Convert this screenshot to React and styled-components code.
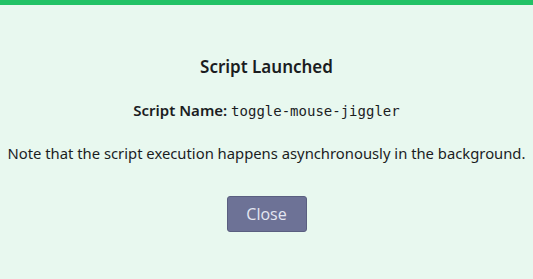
import React from 'react';
import styled, { createGlobalStyle } from 'styled-components';

const GlobalStyle = createGlobalStyle`
  html, body {
    margin: 0;
    padding: 0;
    background: #e8f8ef;
  }
  body {
    font-family: 'Noto Sans', 'Liberation Sans', sans-serif;
    color: #1b1d1f;
  }
`;

const Page = styled.div`
  min-height: 279px;
  border-top: 5px solid #22c266;
  box-sizing: border-box;
  display: flex;
  flex-direction: column;
  align-items: center;
  padding-top: 50px;
`;

const Title = styled.h2`
  margin: 0;
  font-size: 17px;
  font-weight: 600;
  line-height: 24px;
`;

const NameRow = styled.p`
  margin: 20px 0 0;
  font-size: 15px;
  line-height: 22px;
`;

const Label = styled.span`
  font-weight: 600;
`;

const Mono = styled.code`
  font-family: 'DejaVu Sans Mono', 'Liberation Mono', monospace;
  font-size: 14px;
`;

const Note = styled.p`
  margin: 20px 0 0;
  font-size: 14.8px;
  line-height: 22px;
`;

const CloseButton = styled.button`
  margin-top: 32px;
  width: 80px;
  height: 36px;
  background: #6d7296;
  border: 1px solid #5a5f80;
  border-radius: 3px;
  color: #e4e7f2;
  font-family: 'Open Sans', 'Noto Sans', sans-serif;
  font-size: 16px;
  cursor: pointer;
`;

const App = () => (
  <>
    <GlobalStyle />
    <Page>
      <Title>Script Launched</Title>
      <NameRow>
        <Label>Script Name:</Label> <Mono>toggle-mouse-jiggler</Mono>
      </NameRow>
      <Note>Note that the script execution happens asynchronously in the background.</Note>
      <CloseButton>Close</CloseButton>
    </Page>
  </>
);

export default App;
